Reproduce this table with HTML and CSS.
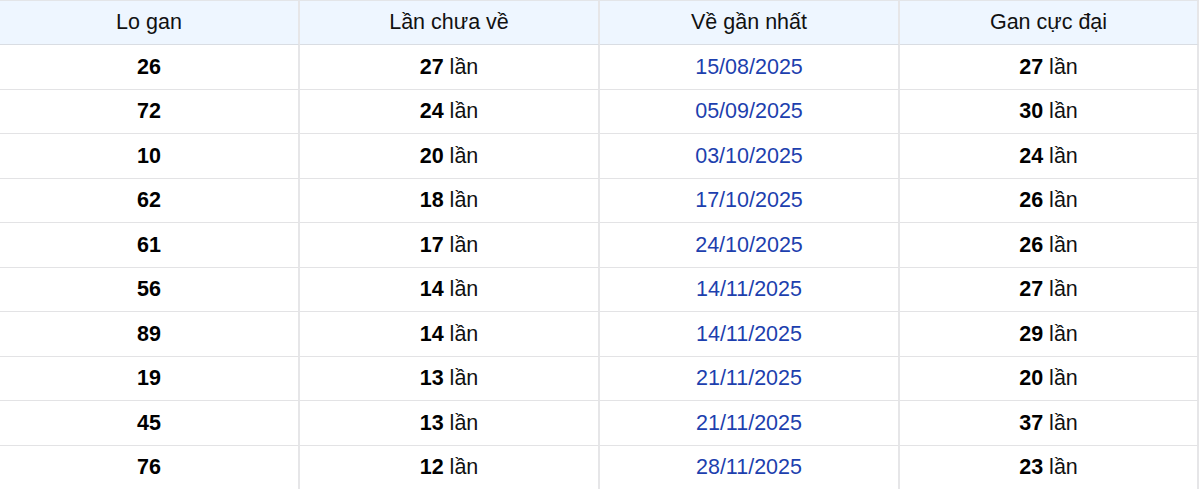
FILE: index.html
```html
<!DOCTYPE html>
<html lang="vi">
<head>
<meta charset="utf-8">
<title>Lo gan</title>
<link rel="stylesheet" href="styles.css">
</head>
<body>
<table class="gan-table">
  <colgroup>
    <col class="c1"><col class="c2"><col class="c3"><col class="c4">
  </colgroup>
  <thead>
    <tr><th>Lo gan</th><th>Lần chưa về</th><th>Về gần nhất</th><th>Gan cực đại</th></tr>
  </thead>
  <tbody>
    <tr><td class="num">26</td><td><b>27</b> lần</td><td class="date">15/08/2025</td><td><b>27</b> lần</td></tr>
    <tr><td class="num">72</td><td><b>24</b> lần</td><td class="date">05/09/2025</td><td><b>30</b> lần</td></tr>
    <tr><td class="num">10</td><td><b>20</b> lần</td><td class="date">03/10/2025</td><td><b>24</b> lần</td></tr>
    <tr><td class="num">62</td><td><b>18</b> lần</td><td class="date">17/10/2025</td><td><b>26</b> lần</td></tr>
    <tr><td class="num">61</td><td><b>17</b> lần</td><td class="date">24/10/2025</td><td><b>26</b> lần</td></tr>
    <tr><td class="num">56</td><td><b>14</b> lần</td><td class="date">14/11/2025</td><td><b>27</b> lần</td></tr>
    <tr><td class="num">89</td><td><b>14</b> lần</td><td class="date">14/11/2025</td><td><b>29</b> lần</td></tr>
    <tr><td class="num">19</td><td><b>13</b> lần</td><td class="date">21/11/2025</td><td><b>20</b> lần</td></tr>
    <tr><td class="num">45</td><td><b>13</b> lần</td><td class="date">21/11/2025</td><td><b>37</b> lần</td></tr>
    <tr><td class="num">76</td><td><b>12</b> lần</td><td class="date">28/11/2025</td><td><b>23</b> lần</td></tr>
  </tbody>
</table>
</body>
</html>
```
FILE: styles.css
```css
html, body {
  margin: 0;
  padding: 0;
  background: #ffffff;
}

body {
  font-family: "Liberation Sans", Arial, sans-serif;
  color: #111111;
  overflow: hidden;
}

.gan-table {
  width: 1199px;
  table-layout: fixed;
  border-collapse: separate;
  border-spacing: 0;
  border-top: 1px solid #e3e5e8;
  font-size: 21.5px;
}

.gan-table .c1, .gan-table .c2, .gan-table .c3 { width: 300px; }
.gan-table .c4 { width: 299px; }

.gan-table th,
.gan-table td {
  box-sizing: border-box;
  height: 44.5px;
  padding: 1px 8px 0;
  text-align: center;
  vertical-align: middle;
  border-right: 2px solid #e6e6e8;
  border-bottom: 1px solid #e3e3e5;
  line-height: 1;
}

.gan-table th {
  height: 44px;
  padding-top: 0;
  background: #eef6ff;
  font-weight: 400;
  color: #111111;
  border-bottom-color: #d9dde3;
}

.gan-table td.num,
.gan-table td b {
  font-weight: 700;
  color: #000000;
}

.gan-table td.date {
  color: #1d3fae;
}
```
